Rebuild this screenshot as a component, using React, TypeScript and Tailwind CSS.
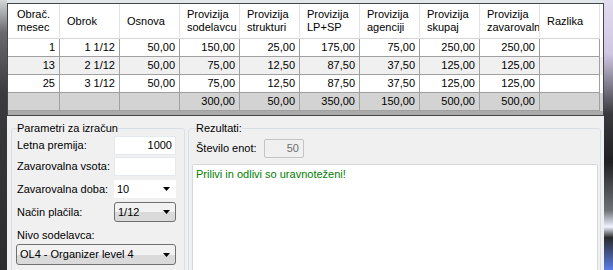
import React from "react";

const headers = [
  ["Obrač.", "mesec"],
  ["Obrok"],
  ["Osnova"],
  ["Provizija", "sodelavcu"],
  ["Provizija", "strukturi"],
  ["Provizija", "LP+SP"],
  ["Provizija", "agenciji"],
  ["Provizija", "skupaj"],
  ["Provizija", "zavarovaln"],
  ["Razlika"],
];

const rows = [
  ["1", "1 1/12", "50,00", "150,00", "25,00", "175,00", "75,00", "250,00", "250,00", ""],
  ["13", "2 1/12", "50,00", "75,00", "12,50", "87,50", "37,50", "125,00", "125,00", ""],
  ["25", "3 1/12", "50,00", "75,00", "12,50", "87,50", "37,50", "125,00", "125,00", ""],
];

const totals = ["", "", "", "300,00", "50,00", "350,00", "150,00", "500,00", "500,00", ""];

function Arrow() {
  return (
    <svg width="7" height="4" viewBox="0 0 7 4" className="shrink-0">
      <polygon points="0,0 7,0 3.5,4" fill="#000" />
    </svg>
  );
}

function ButtonCombo({ value, className }: { value: string; className: string }) {
  return (
    <div
      className={`flex items-center justify-between rounded-[3px] border border-[#707070] bg-gradient-to-b from-[#f2f2f2] from-50% to-[#dadada] to-50% pl-[3px] pr-[5px] ${className}`}
    >
      <span>{value}</span>
      <Arrow />
    </div>
  );
}

export default function App() {
  return (
    <div className="flex h-[270px] w-[613px] overflow-hidden bg-[#f0f0f0] font-['Liberation_Sans',Arial,sans-serif] text-[11px] leading-[13px] text-black">
      {/* left window frame */}
      <div className="w-[7px] shrink-0 bg-[linear-gradient(to_bottom,#d4d6d9_0%,#6a6a6c_12%,#3a3a3c_35%,#2c2c2e_100%)]" />

      <div className="flex w-[597px] shrink-0 flex-col">
        <div className="h-[3px] shrink-0 bg-[#e2e7ec]" />

        {/* Grid */}
        <div className="flex h-[113px] shrink-0 flex-col border border-[#464646] bg-[#ababab]">
          <div className="flex h-[35px] shrink-0 bg-white">
            {headers.map((h, i) => (
              <div
                key={i}
                className={`flex h-full shrink-0 flex-col justify-center overflow-hidden whitespace-nowrap border-b border-r border-b-[#d5d5d5] border-r-[#e3e3e3] ${
                  i === 0 ? "w-[52px] pl-[9px]" : "w-[60px] pl-[7px]"
                }`}
              >
                {h.map((line) => (
                  <span key={line}>{line}</span>
                ))}
              </div>
            ))}
          </div>
          {rows.map((r, ri) => (
            <div key={ri} className={`flex h-[18px] shrink-0 ${ri === 1 ? "bg-[#f0f0f0]" : "bg-white"}`}>
              {r.map((c, ci) => (
                <div
                  key={ci}
                  className={`flex h-full shrink-0 items-center justify-end border-b border-r border-[#a0a0a0] pr-[4px] ${
                    ci === 0 ? "w-[52px]" : "w-[60px]"
                  }`}
                >
                  {c}
                </div>
              ))}
            </div>
          ))}
          <div className="flex h-[18px] shrink-0 bg-[#d3d3d3]">
            {totals.map((c, ci) => (
              <div
                key={ci}
                className={`flex h-full shrink-0 items-center justify-end border-b border-r border-[#a0a0a0] pr-[4px] ${
                  ci === 0 ? "w-[52px]" : "w-[60px]"
                }`}
              >
                {c}
              </div>
            ))}
          </div>
        </div>

        {/* Lower panel */}
        <div className="flex flex-1 items-start pt-[6px]">
          <fieldset className="ml-[4px] h-[160px] w-[174px] shrink-0 rounded-[3px] border border-[#d5dfe5] px-0">
            <legend className="ml-[5px] px-0 leading-[13px]">Parametri za izračun</legend>
            <div className="mt-[1px] flex h-[19px] items-center">
              <span className="w-[102px] shrink-0 pl-[5px]">Letna premija:</span>
              <div className="flex h-full w-[62px] items-center justify-end border border-[#e3e9ef] bg-white pr-[3px]">1000</div>
            </div>
            <div className="mt-[2px] flex h-[19px] items-center">
              <span className="w-[102px] shrink-0 pl-[5px]">Zavarovalna vsota:</span>
              <div className="h-full w-[62px] border border-[#e3e9ef] bg-white" />
            </div>
            <div className="mt-[4px] flex h-[18px] items-center">
              <span className="w-[102px] shrink-0 pl-[5px]">Zavarovalna doba:</span>
              <div className="flex h-full w-[62px] items-center justify-between border border-white bg-white pl-[2px] pr-[5px]">
                <span>10</span>
                <Arrow />
              </div>
            </div>
            <div className="mt-[4px] flex h-[20px] items-center">
              <span className="w-[102px] shrink-0 pl-[5px]">Način plačila:</span>
              <ButtonCombo value="1/12" className="h-full w-[62px]" />
            </div>
            <div className="mt-[7px] pl-[5px]">Nivo sodelavca:</div>
            <ButtonCombo value="OL4 - Organizer level 4" className="ml-[4px] mt-[2px] h-[21px] w-[160px]" />
          </fieldset>

          <fieldset className="ml-[3px] h-[160px] w-[413px] shrink-0 rounded-[3px] border border-[#d5dfe5] px-0">
            <legend className="ml-[7px] px-0 leading-[13px]">Rezultati:</legend>
            <div className="mt-[4px] flex h-[19px] items-center">
              <span className="w-[75px] shrink-0 pl-[7px]">Število enot:</span>
              <div className="flex h-full w-[40px] items-center justify-end rounded-[2px] border border-[#c4c4c4] bg-[#f0f0f0] pr-[4px] text-[#6d6d6d]">
                50
              </div>
            </div>
            <div className="ml-[3px] mt-[6px] h-[120px] w-[406px] rounded-t-[2px] border border-[#d6d9dc] bg-white pl-[3px] pt-[3px] text-[#008000]">
              Prilivi in odlivi so uravnoteženi!
            </div>
          </fieldset>
        </div>
      </div>

      {/* right window frame */}
      <div className="w-[9px] shrink-0 bg-[linear-gradient(to_bottom,#e2dcef_0%,#cfc6e2_20%,#3a3a3e_42%,#202022_60%,#6f7378_78%,#eef3ff_84%,#2a2a2c_88%,#5b7de6_100%)]" />
    </div>
  );
}
